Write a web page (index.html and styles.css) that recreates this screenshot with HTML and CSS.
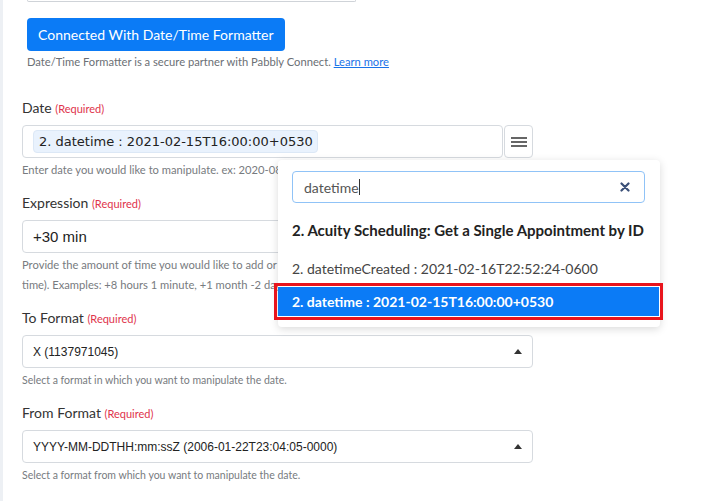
FILE: index.html
```html
<!DOCTYPE html>
<html lang="en">
<head>
    <meta charset="UTF-8">
    <meta name="viewport" content="width=device-width, initial-scale=1.0">
    <title>Date/Time Formatter</title>
    <link rel="stylesheet" href="styles.css">
</head>
<body>
    <div class="page">
        <div class="prev-field"></div>

        <div class="connect">
            <button class="btn-connect">Connected With Date/Time Formatter</button>
            <p class="partner">Date/Time Formatter is a secure partner with Pabbly Connect. <a href="#">Learn more</a></p>
        </div>

        <div class="field">
            <label class="label">Date <span class="req">(Required)</span></label>
            <div class="date-row">
                <div class="input tags">
                    <span class="chip">2. datetime : 2021-02-15T16:00:00+0530</span>
                </div>
                <button class="menu-btn">
                    <svg width="16" height="12" viewBox="0 0 16 12">
                        <rect x="0" y="1" width="16" height="2" fill="#666"/>
                        <rect x="0" y="5" width="16" height="2" fill="#666"/>
                        <rect x="0" y="9" width="16" height="2" fill="#666"/>
                    </svg>
                </button>

                <!-- open mapping menu -->
                <div class="dropdown">
                    <div class="search">
                        <span class="search-text">datetime</span><span class="caret-line"></span>
                        <svg class="clear" width="10" height="10" viewBox="0 0 10 10">
                            <path d="M1.5 1.5 L8.5 8.5 M8.5 1.5 L1.5 8.5" stroke="#3b5078" stroke-width="2.2" stroke-linecap="round"/>
                        </svg>
                    </div>
                    <div class="opt-group">2. Acuity Scheduling: Get a Single Appointment by ID</div>
                    <div class="opt">2. datetimeCreated : 2021-02-16T22:52:24-0600</div>
                    <div class="opt active">2. datetime : 2021-02-15T16:00:00+0530</div>
                </div>
            </div>
            <p class="hint clip">Enter date you would like to manipulate. ex: 2020-08-14T12:00:00</p>
        </div>

        <div class="field">
            <label class="label">Expression <span class="req">(Required)</span></label>
            <div class="input text-input">+30 min</div>
            <p class="hint clip">Provide the amount of time you would like to add or subtract to the date (negative values subtract<br>time). Examples: +8 hours 1 minute, +1 month -2 days.</p>
        </div>

        <div class="field">
            <label class="label">To Format <span class="req">(Required)</span></label>
            <div class="input select">
                <span>X (1137971045)</span>
                <span class="tri"></span>
            </div>
            <p class="hint">Select a format in which you want to manipulate the date.</p>
        </div>

        <div class="field">
            <label class="label">From Format <span class="req">(Required)</span></label>
            <div class="input select">
                <span>YYYY-MM-DDTHH:mm:ssZ (2006-01-22T23:04:05-0000)</span>
                <span class="tri"></span>
            </div>
            <p class="hint">Select a format from which you want to manipulate the date.</p>
        </div>
    </div>
</body>
</html>
```

FILE: styles.css
```css
* {
    box-sizing: border-box;
    margin: 0;
    padding: 0;
}

body {
    background: #fff;
    font-family: Lato, 'Open Sans', sans-serif;
    color: #333;
    overflow: hidden;
}

.page {
    border-left: 3px solid #edf0f4;
    min-height: 501px;
    padding-left: 19px;
    width: 511px;
    box-sizing: content-box;
}

.prev-field {
    margin-left: 5px;
    width: 329px;
    height: 2px;
    border: 1px solid #cfd3d8;
    border-top: none;
    border-radius: 0 0 4px 4px;
}

.connect {
    padding-left: 5px;
    margin-top: 16px;
}

.btn-connect {
    background: #0b7bf6;
    color: #fff;
    border: none;
    border-radius: 4px;
    height: 33px;
    padding: 0 11px;
    font-family: inherit;
    font-size: 14px;
}

.partner {
    margin-top: 4px;
    font-size: 11.2px;
    line-height: 14px;
    color: #6b6f75;
}

.partner a {
    color: #1a73e8;
}

.field {
    margin-bottom: 14px;
}

.connect + .field {
    margin-top: 30px;
}

.label {
    display: block;
    font-size: 14px;
    line-height: 18px;
    margin-bottom: 7px;
    color: #333;
}

.req {
    font-size: 11px;
    color: #e0344c;
}

.input {
    height: 33px;
    border: 1px solid #d6dadf;
    border-radius: 4px;
    background: #fff;
}

.date-row {
    position: relative;
    display: flex;
    gap: 1px;
}

.tags {
    flex: 1;
    padding: 4px 10px;
}

.chip {
    display: inline-block;
    height: 23px;
    line-height: 22px;
    padding: 0 4px 0 5px;
    background: #e9f2fd;
    border: 1px solid #dce8f6;
    border-radius: 4px;
    font-family: 'DejaVu Sans', sans-serif;
    font-size: 13px;
    color: #222;
}

.menu-btn {
    width: 29px;
    height: 33px;
    border: 1px solid #d6dadf;
    border-radius: 4px;
    background: #fff;
    display: flex;
    align-items: center;
    justify-content: center;
}

.hint {
    margin-top: 2px;
    font-size: 10.5px;
    line-height: 20px;
    color: #777b80;
    white-space: nowrap;
}

.hint.clip {
    width: 256px;
    overflow: hidden;
    font-size: 11.2px;
}

.text-input {
    padding: 0 10px;
    line-height: 31px;
    font-family: 'Liberation Sans', Arial, sans-serif;
    font-size: 15px;
    color: #222;
}

.select {
    display: flex;
    align-items: center;
    justify-content: space-between;
    padding: 0 10px;
    font-family: 'Liberation Sans', Arial, sans-serif;
    font-size: 12px;
    color: #222;
}

.tri {
    width: 0;
    height: 0;
    border-left: 4px solid transparent;
    border-right: 4px solid transparent;
    border-bottom: 5px solid #333;
}

/* mapping dropdown */
.dropdown {
    position: absolute;
    top: 35px;
    left: 256px;
    width: 382px;
    background: #fff;
    border-radius: 4px;
    box-shadow: 0 2px 8px rgba(0, 0, 0, 0.15);
    padding: 11px 0 11px;
    z-index: 5;
}

.search {
    position: relative;
    margin: 0 15px 0 14px;
    height: 32px;
    border: 1px solid #90c3f7;
    border-radius: 4px;
    padding-left: 11px;
    display: flex;
    align-items: center;
    font-size: 14px;
    color: #555;
}

.caret-line {
    display: inline-block;
    width: 1px;
    height: 16px;
    background: #333;
}

.clear {
    position: absolute;
    right: 14px;
    top: 10px;
}

.opt-group {
    margin-top: 12px;
    padding-left: 14px;
    line-height: 30px;
    font-size: 15px;
    font-weight: bold;
    color: #222;
}

.opt {
    padding-left: 14px;
    font-size: 14px;
    line-height: 29px;
    color: #444;
}

.opt-group + .opt {
    margin-top: 9px;
}

.opt.active {
    margin-top: 4px;
    margin-right: 1px;
    background: #0b7bf6;
    color: #fff;
    font-weight: bold;
    outline: 3px solid #e8141c;
    outline-offset: 1px;
}
```
